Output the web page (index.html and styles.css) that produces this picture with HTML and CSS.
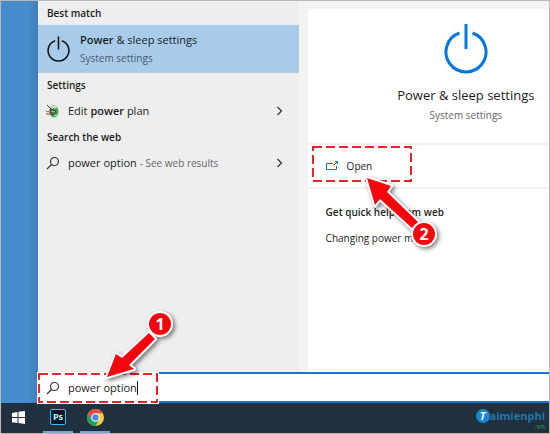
FILE: index.html
```html
<!DOCTYPE html>
<html lang="en">
<head>
  <meta charset="UTF-8" />
  <meta name="viewport" content="width=device-width, initial-scale=1.0"/>
  <title>Power &amp; sleep settings - Search</title>
  <link rel="stylesheet" href="styles.css">
</head>
<body>
  <div class="desktop">
    <main class="search-window">
      <div class="panels">
        <section class="results">
          <h2>Best match</h2>
          <button class="best-match">
            <svg class="power-icon" viewBox="0 0 44 50" fill="none" stroke="currentColor">
              <path d="M15.500 9A20 20 0 1 0 28.500 9M22 1V26" stroke-width="3"/>
            </svg>
            <span class="best-text">
              <span class="item-title"><b>Power</b> &amp; sleep settings</span>
              <span class="sub">System settings</span>
            </span>
          </button>

          <h2>Settings</h2>
          <button class="row">
            <svg class="row-icon" viewBox="0 0 14 14">
              <ellipse cx="8" cy="7.500" rx="4.500" ry="6" fill="#3fae45"/>
              <ellipse cx="8" cy="3" rx="3" ry="1.500" fill="#c9d5c9"/>
              <path d="M1 1l4 4" stroke="#333"/>
              <path d="M4 5.500l5 .5 1 2.500-3 2.500-3-1.500z" fill="#62635b" stroke="#333" stroke-width=".8"/>
              <path d="M0 7.500h4M0 10h4" stroke="#b98a35" stroke-width="1.300"/>
              <path d="M5 7l4 1" stroke="#bbb"/>
              <path d="M8 12l3-1.500" stroke="#7ae06f" stroke-width="1.500"/>
            </svg>
            <span class="item-title">Edit <b>power</b> plan</span>
            <svg class="chevron" viewBox="0 0 8 10"><path d="M1.500 1l4 4-4 4"/></svg>
          </button>

          <h2>Search the web</h2>
          <button class="row">
            <svg class="row-icon glass" viewBox="0 0 14 14"><circle cx="8.500" cy="5.500" r="4"/><path d="M5.500 8.500L1 13"/></svg>
            <span class="item-title">power option <small>- See web results</small></span>
            <svg class="chevron" viewBox="0 0 8 10"><path d="M1.500 1l4 4-4 4"/></svg>
          </button>
        </section>

        <section class="preview">
          <div class="hero">
            <svg class="hero-icon" viewBox="0 0 44 50" fill="none" stroke="currentColor">
              <path d="M15.500 9A20 20 0 1 0 28.500 9M22 0V25" stroke-width="3"/>
            </svg>
            <h1>Power &amp; sleep settings</h1>
            <p class="sub">System settings</p>
          </div>
          <button class="open">
            <svg class="open-icon" viewBox="0 0 12 10" fill="none" stroke="currentColor">
              <path d="M7 2.500H.5v6h10V5M7.500 4.500l4-4M9 .5h2.500V3"/>
            </svg>
            Open
          </button>
          <div class="help">
            <h3>Get quick help from web</h3>
            <a href="#">Changing power mode</a>
          </div>
        </section>
      </div>

      <label class="search-bar">
        <svg class="row-icon glass" viewBox="0 0 14 14"><circle cx="8.500" cy="5.500" r="4"/><path d="M5.500 8.500L1 13"/></svg>
        <input type="text" value="power option" aria-label="Search">
        <span class="caret"></span>
      </label>
    </main>
  </div>

  <footer class="taskbar">
    <button class="task" aria-label="Start">
      <svg class="start-icon" viewBox="0 0 13 13" fill="#fff"><path d="M0 2l5.500-1v5H0zM6.500.8L13 0v6H6.500zM0 7h5.500v5L0 11.200zM6.500 7H13v6l-6.500-.9z"/></svg>
    </button>
    <button class="task running" aria-label="Photoshop"><span class="ps">Ps</span></button>
    <button class="task running" aria-label="Chrome">
      <svg class="chrome-icon" viewBox="0 0 16 16">
        <circle cx="8" cy="8" r="8" fill="#ffcd41"/>
        <path d="M1.070 4A8 8 0 0 0 8 16L11.500 10 8 8 4.500 10z" fill="#1da260"/>
        <path d="M8 4h6.930A8 8 0 0 0 1.070 4L4.500 10z" fill="#dd4f3e"/>
        <circle cx="8" cy="8" r="4" fill="#fff"/>
        <circle cx="8" cy="8" r="3" fill="#4b8bf0"/>
      </svg>
    </button>
    <div class="brand">
      <span class="brand-t">T</span>
      <span class="brand-name">aimienphi<small>.vn</small></span>
    </div>
  </footer>

  <!-- numbered steps -->
  <svg class="steps step-one" viewBox="0 0 130 100">
    <rect class="dash-back" x="3" y="69" width="118" height="28"/>
    <rect class="dash" x="3" y="69" width="118" height="28"/>
    <g class="arrow">
      <path d="M71 72L80 49 86 53 113 28 119 34 93 60 98 64z"/>
      <circle cx="124" cy="19" r="11"/>
    </g>
    <text x="124" y="25">1</text>
  </svg>
  <svg class="steps step-two" viewBox="0 0 130 106">
    <rect class="dash" x="3" y="3" width="98" height="34"/>
    <g class="arrow">
      <path d="M57 34L81 42 77 48 108 78 102 84 70 55 65 61z"/>
      <circle cx="114" cy="90" r="11"/>
    </g>
    <text x="114" y="96">2</text>
  </svg>
</body>
</html>
```

FILE: styles.css
```css
* {
  margin: 0;
  padding: 0;
  box-sizing: border-box;
}

body {
  position: relative;
  min-height: 100vh;
  display: flex;
  flex-direction: column;
  border: 1px solid #b9b9b9;
  font-family: 'Open Sans', 'Noto Sans', sans-serif;
  font-size: 11px;
  line-height: 16px;
  color: #1c1c1c;
  overflow: hidden;
}

button {
  border: none;
  background: none;
  font: inherit;
  color: inherit;
  text-align: left;
}

b,
h2,
h3 {
  font-weight: 600;
}

.desktop {
  flex: 1;
  display: flex;
  padding-left: 37px;
  background: linear-gradient(90deg, #468bcb 28px, #3f7db8 37px);
}

.search-window {
  flex: 1;
  display: flex;
  flex-direction: column;
  background: #f3f3f3;
}

.panels {
  flex: 1;
  display: flex;
}

.results {
  width: 51%;
  background: #eee;
}

.results h2 {
  padding: 4px 9px;
  font-size: 10px;
}

.best-match {
  width: 100%;
  height: 48px;
  display: flex;
  align-items: center;
  gap: 10px;
  padding: 0 9px;
  background: #a8cbea;
}

.power-icon {
  width: 23px;
  height: 26px;
  color: #111;
}

.best-text {
  display: flex;
  flex-direction: column;
  gap: 2px;
}

.item-title {
  font-size: 11px;
}

.sub,
small {
  font-size: 10px;
  color: #666;
}

.best-match .sub {
  color: #4b5a68;
}

.row {
  width: 100%;
  height: 28px;
  display: flex;
  align-items: center;
  gap: 8px;
  padding: 0 15px 0 8px;
}

.row-icon {
  flex: none;
  width: 14px;
  height: 14px;
}

.glass,
.chevron {
  fill: none;
  stroke: #333;
  stroke-width: 1.200;
}

.chevron {
  width: 8px;
  height: 10px;
  margin-left: auto;
}

.preview {
  flex: 1;
  margin: 8px 0 0 9px;
  background: #fff;
}

.hero {
  display: flex;
  flex-direction: column;
  align-items: center;
  height: 136px;
  padding: 15px 0 0 75px;
  border-bottom: 2px solid #f0f0f0;
}

.hero-icon {
  width: 44px;
  height: 50px;
  color: #0078d7;
}

.hero h1 {
  margin: 13px 0 4px;
  font-size: 13px;
  font-weight: 400;
}

.open {
  width: 100%;
  height: 44px;
  display: flex;
  align-items: center;
  gap: 9px;
  padding-left: 18px;
  border-bottom: 2px solid #f0f0f0;
  font-size: 10px;
}

.open-icon {
  width: 12px;
  height: 10px;
  color: #0078d7;
}

.help {
  display: flex;
  flex-direction: column;
  gap: 10px;
  padding: 15px 18px;
}

.help h3,
.help a {
  font-size: 10px;
  color: inherit;
  text-decoration: none;
}

.search-bar {
  display: flex;
  align-items: center;
  height: 31px;
  padding-left: 8px;
  border: solid #1976d2;
  border-width: 2px 0;
  background: #fff;
}

.search-bar input {
  width: 69px;
  margin-left: 8px;
  border: none;
  outline: none;
  font: inherit;
  color: inherit;
  background: none;
}

.caret {
  width: 1px;
  height: 14px;
  background: #111;
}

.taskbar {
  display: flex;
  height: 30px;
  gap: 7px;
  background: #20303f;
}

.task {
  width: 30px;
  display: flex;
  align-items: center;
  justify-content: center;
  border-bottom: 2px solid transparent;
}

.task:first-child {
  width: 35px;
}

.running {
  border-color: #6fa9dc;
}

.start-icon {
  width: 13px;
  height: 13px;
}

.ps {
  width: 16px;
  height: 16px;
  border: 1px solid #29c5f6;
  border-radius: 2px;
  background: #071722;
  color: #c9f2ff;
  font-size: 9px;
  font-weight: 700;
  line-height: 14px;
  text-align: center;
}

.chrome-icon {
  width: 17px;
  height: 17px;
}

.brand {
  display: flex;
  align-items: flex-start;
  margin-left: auto;
  padding: 6px 4px 0 0;
  color: #2476a8;
}

.brand-t {
  width: 14px;
  height: 14px;
  border-radius: 50%;
  background: #1688cf;
  color: #fff;
  font-size: 11px;
  font-style: italic;
  font-weight: 700;
  line-height: 14px;
  text-align: center;
}

.brand-name {
  display: flex;
  flex-direction: column;
  font-size: 11px;
  font-weight: 700;
  line-height: 14px;
}

.brand-name small {
  color: #247a45;
  font-size: 7px;
  line-height: 8px;
  text-align: right;
}

/* step markers lie over the window */
.steps {
  position: absolute;
  overflow: visible;
  pointer-events: none;
}

.step-one {
  left: 35px;
  bottom: 28px;
  width: 130px;
  height: 100px;
}

.step-two {
  left: 309px;
  top: 143px;
  width: 130px;
  height: 106px;
}

.dash,
.dash-back {
  fill: none;
  stroke: #e8242b;
  stroke-width: 2;
  stroke-dasharray: 9 4;
}

.dash-back {
  stroke: #fff;
  stroke-width: 4;
  stroke-dasharray: none;
}

.arrow {
  fill: #f5060c;
  stroke: #fff;
  stroke-width: 4;
  stroke-linejoin: round;
  paint-order: stroke;
  filter: drop-shadow(2px 2px 2px rgba(0, 0, 0, 0.5));
}

.steps text {
  fill: #fff;
  font-size: 16px;
  font-weight: 700;
  text-anchor: middle;
}
```
